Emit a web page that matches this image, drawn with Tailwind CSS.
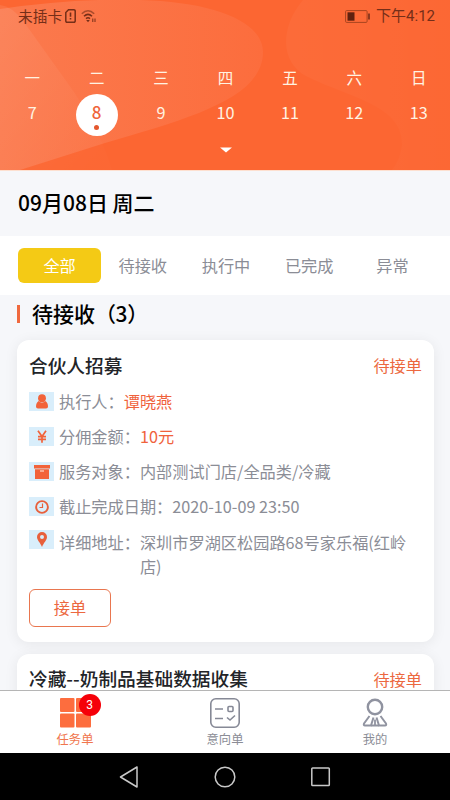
<!DOCTYPE html>
<html lang="zh-CN">
<head>
<meta charset="utf-8">
<title>任务单</title>
<script src="https://cdn.jsdelivr.net/npm/@tailwindcss/browser@4"></script>
</head>
<body class="w-[450px] h-[800px] overflow-hidden flex flex-col bg-[#f6f7fa] font-['Noto_Sans_CJK_SC',sans-serif] text-[16.2px] text-[#8b8d96]">
<header class="relative h-[170px] shrink-0 bg-[#fc6632] text-[#fff3e2]">
  <svg class="absolute inset-0" width="450" height="170" viewBox="0 0 450 170">
    <defs>
      <linearGradient id="a" x1="0" y1="0" x2="1" y2="0"><stop offset="0" stop-color="#fb7a4e"/><stop offset="1" stop-color="#fc6d3d"/></linearGradient>
      <linearGradient id="b" x1="0" y1="0" x2=".8" y2="1"><stop offset="0" stop-color="#fff" stop-opacity=".08"/><stop offset="1" stop-color="#fff" stop-opacity=".01"/></linearGradient>
      <linearGradient id="c" x1="0" y1="0" x2="1" y2="0"><stop offset="0" stop-color="#fff" stop-opacity=".035"/><stop offset="1" stop-color="#fff" stop-opacity=".01"/></linearGradient>
    </defs>
    <path d="M0 9Q75-2 140 0C215 2 263 22 263 52C263 98 190 118 105 143L20 170H0Z" fill="url(#a)"/>
    <path d="M0 5Q12 6 24 22L74 92Q102 135 112 170H0Z" fill="url(#b)"/>
    <path d="M303 0C280 27 280 62 306 76C350 98 403 105 402 145Q400 160 392 170H450V0Z" fill="url(#c)"/>
  </svg>
  <div class="relative flex flex-col">
    <div class="h-8 pl-[18px] pr-[15px] flex items-center text-[14.7px] text-[#752e18]">
      <span>未插卡</span>
      <svg class="ml-[3px]" width="11" height="14" viewBox="0 0 11 14" fill="none" stroke="#752e18" stroke-width="1.5"><path d="M3.5.8H9a1.2 1.2 0 0 1 1.2 1.2v10A1.2 1.2 0 0 1 9 13.2H2A1.2 1.2 0 0 1 .8 12V3.5Z"/><path d="M5.5 3.5v4.3M5.5 9v1.6" stroke-width="1.6"/></svg>
      <svg class="ml-[5px]" width="16" height="14" viewBox="0 0 16 14" fill="none" stroke="#752e18" stroke-width="1.5"><path d="M.8 4.800Q7 -1.500 13.200 4.800" stroke-opacity=".6"/><path d="M3 7.300Q7 3.500 11 7.300M5 9.600Q7 8 9 9.600"/><path d="M5.200 11h3.600L7 13.200Z" fill="#752e18" stroke="none"/><path d="M11.800 9.500v3.500M14 9.500V13" stroke-width="1"/></svg>
      <svg class="ml-auto mr-[5px]" width="26" height="13" viewBox="0 0 26 13"><rect x=".6" y=".6" width="21.500" height="11.800" rx="1" fill="none" stroke="#a8451f" stroke-width="1"/><path d="M2.500 2.300H9.500V10.700H2.500Z" fill="#5f210f"/><path d="M23.200 3.500h1.600v6h-1.600Z" fill="#752e18"/></svg>
      <span class="font-[Roboto,'Noto_Sans_CJK_SC',sans-serif] text-[15px]">下午4:12</span>
    </div>
    <div class="mt-[33px] -mr-px grid grid-cols-7 text-center leading-6 text-[15.5px]">
      <span>一</span><span>二</span><span>三</span><span>四</span><span>五</span><span>六</span><span>日</span>
    </div>
    <div class="mt-[5px] -mr-px grid grid-cols-7 justify-items-center text-center leading-9 text-[16.2px]">
      <span>7</span>
      <span class="size-[42px] rounded-full bg-white text-[#f0643a] font-medium flex flex-col items-center text-[17px]">8<i class="block size-[5px] -mt-[5px] rounded-full bg-[#e4572e]"></i></span>
      <span>9</span><span>10</span><span>11</span><span>12</span><span>13</span>
    </div>
    <svg class="self-center mt-[11px] ml-px" width="12" height="6" viewBox="0 0 12 6"><path d="M0 .5H12L6 5.500Z" fill="#fff"/></svg>
  </div>
</header>
<main class="flex-1 min-h-0 overflow-hidden">
  <h1 class="h-[66px] pb-0.5 px-[18px] flex items-center text-[21px] font-medium text-black border-t border-[#fde0d0]">09月08日 周二</h1>
  <nav class="h-[59px] pl-[18px] pr-[16px] bg-white grid grid-cols-5 items-center text-center">
    <span class="h-[35px] leading-[35px] rounded-md bg-[#f4ca15] text-white">全部</span><span>待接收</span><span>执行中</span><span>已完成</span><span>异常</span>
  </nav>
  <h2 class="h-[38px] ml-[17px] flex items-center gap-3 text-[21px] font-medium text-black"><i class="w-[3px] h-[18px] bg-[#f0693e]"></i><span>待接收<span class="tracking-[-0.4px]">（3）</span></span></h2>
  <div class="mt-[7px] ml-[17px] mr-4 flex flex-col gap-3">
    <article class="h-[302px] shrink-0 rounded-xl bg-white px-3 pt-3 shadow-[0_2px_14px_rgba(0,0,0,0.07)]">
      <div class="h-[26px] flex items-center justify-between"><h3 class="text-[18.7px] font-medium text-[#222428]">合伙人招募</h3><span class="text-[#ec6840]">待接单</span></div>
      <ul class="mt-[6px]">
        <li class="h-[35px] flex items-center gap-[5px]"><span class="w-[25px] h-[19px] bg-[#d9eefb] flex items-center justify-center"><svg width="12" height="15" viewBox="0 0 12 15" fill="#f2633a"><circle cx="6" cy="4.200" r="3.900"/><path d="M2.700 7Q6 10 9.300 7Q12 8.500 12 12.500Q12 14.500 10 14.500H2Q0 14.500 0 12.500Q0 8.500 2.700 7Z"/></svg></span><span>执行人：<b class="font-normal text-[#f0623c]">谭晓燕</b></span></li>
        <li class="h-[35px] flex items-center gap-[5px]"><span class="w-[25px] h-[19px] bg-[#d9eefb] flex items-center justify-center"><svg width="10" height="13" viewBox="0 0 10 13" fill="none" stroke="#f2633a" stroke-width="1.700"><path d="M1 .7L5 6.500L9 .7M5 6.500V12.700M1 6.700H9M1 9.400H9"/></svg></span><span>分佣金额：<b class="font-normal text-[#f0623c]">10元</b></span></li>
        <li class="h-[35px] flex items-center gap-[5px]"><span class="w-[25px] h-[19px] bg-[#d9eefb] flex items-center justify-center"><svg width="16" height="14" viewBox="0 0 16 14" fill="#f2633a"><path d="M0 0H16V3.500H0ZM1 4.200H15V14H1Z"/><path d="M6 6H10" stroke="#ffd9c8" stroke-width="1.200"/></svg></span><span>服务对象：内部测试门店/全品类/冷藏</span></li>
        <li class="h-[35px] flex items-center gap-[5px]"><span class="w-[25px] h-[19px] bg-[#d9eefb] flex items-center justify-center"><svg width="14" height="14" viewBox="0 0 14 14" fill="none" stroke="#e8603c"><circle cx="7" cy="7" r="5.900" stroke-width="1.900"/><path d="M7.500 3.500V7.500H4.500" stroke-width="1.200"/></svg></span><span>截止完成日期：2020-10-09 23:50</span></li>
        <li class="pt-[6px] flex gap-[5px] leading-6"><span class="w-[25px] h-[19px] shrink-0 bg-[#d9eefb] flex items-center justify-center"><svg width="10" height="15" viewBox="0 0 10 15"><path fill-rule="evenodd" d="M5 0A5 5 0 0 1 10 5C10 8 6.500 11 5 15C3.500 11 0 8 0 5A5 5 0 0 1 5 0ZM5 3A2 2 0 1 0 5 7A2 2 0 1 0 5 3Z" fill="#e8603c"/></svg></span><span class="shrink-0 -mr-[5px]">详细地址：</span><span class="w-[268px]">深圳市罗湖区松园路68号家乐福(红岭店)</span></li>
      </ul>
      <button class="mt-[11px] w-[82px] h-[38px] pb-px rounded-md border-[1.5px] border-[#e9764f] text-[#ec6840]">接单</button>
    </article>
    <article class="h-[302px] shrink-0 rounded-xl bg-white px-3 pt-3 shadow-[0_2px_14px_rgba(0,0,0,0.07)]">
      <div class="h-[26px] flex items-center justify-between"><h3 class="-mt-px text-[18.7px] font-medium text-[#222428]">冷藏--奶制品基础数据收集</h3><span class="text-[#ec6840]">待接单</span></div>
    </article>
  </div>
</main>
<footer class="relative h-[63px] shrink-0 bg-white border-t border-[#b5b5b5] grid grid-cols-3 text-[12.3px]">
  <div class="flex flex-col items-center pt-[7px] text-[#f0764e]">
    <div class="relative"><svg width="31" height="30" viewBox="0 0 31 30" fill="#fd6d3e"><rect width="14.500" height="14" rx="1"/><rect x="16" width="15" height="14" rx="1"/><rect y="15.500" width="14.500" height="14" rx="1"/><rect x="16" y="15.500" width="15" height="14" rx="1"/></svg>
      <span class="absolute left-[19px] -top-[4px] size-[22px] rounded-full bg-[#f50009] text-white text-center leading-[22px] text-xs font-[Roboto,sans-serif]">3</span></div>
    <span class="leading-[22px]">任务单</span>
  </div>
  <div class="flex flex-col items-center pt-[7px]">
    <svg width="30" height="30" viewBox="0 0 30 30" fill="none" stroke="#868996" stroke-width="1.600"><rect x=".8" y=".8" width="28.400" height="28.400" rx="5"/><path d="M5 11H13M5 20.500H13M17 19.500L20 22L25 17.500"/><rect x="18" y="8.500" width="5" height="5" rx="1"/></svg>
    <span class="leading-[22px]">意向单</span>
  </div>
  <div class="flex flex-col items-center pt-[7px]">
    <svg class="-ml-px" width="26" height="30" viewBox="0 0 26 30" fill="none" stroke="#9093a0" stroke-width="2.400" stroke-linejoin="round"><circle cx="13" cy="9" r="7.200"/><path d="M7.500 18L2 25.500Q1.300 27.500 3 27.500H9L11.500 19.500M18.500 18L24 25.500Q24.700 27.500 23 27.500H17L14.500 19.500" stroke-width="2"/><path d="M13 21.500V27M9 27.500H17" stroke-width="1.800"/></svg>
    <span class="leading-[22px]">我的</span>
  </div>
</footer>
<div class="h-[47px] shrink-0 bg-black flex items-center justify-center gap-[75px]">
  <svg width="20" height="22" viewBox="0 0 20 22" fill="none" stroke="#c9c9c9" stroke-width="1.500" stroke-linejoin="round"><path d="M18 1V21L1.500 11Z"/></svg>
  <svg width="22" height="22" viewBox="0 0 22 22" fill="none" stroke="#c9c9c9" stroke-width="1.500"><circle cx="11" cy="11" r="9.800"/></svg>
  <svg width="20" height="20" viewBox="0 0 20 20" fill="none" stroke="#c9c9c9" stroke-width="1.500"><rect x=".8" y="1" width="17.500" height="17.500" rx=".8"/></svg>
</div>
</body>
</html>
